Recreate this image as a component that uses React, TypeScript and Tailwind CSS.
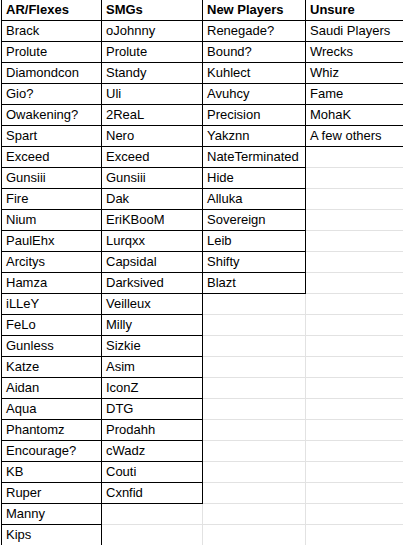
const columns: { title: string; items: string[] }[] = [
  {
    title: "AR/Flexes",
    items: [
      "Brack",
      "Prolute",
      "Diamondcon",
      "Gio?",
      "Owakening?",
      "Spart",
      "Exceed",
      "Gunsiii",
      "Fire",
      "Nium",
      "PaulEhx",
      "Arcitys",
      "Hamza",
      "iLLeY",
      "FeLo",
      "Gunless",
      "Katze",
      "Aidan",
      "Aqua",
      "Phantomz",
      "Encourage?",
      "KB",
      "Ruper",
      "Manny",
      "Kips",
    ],
  },
  {
    title: "SMGs",
    items: [
      "oJohnny",
      "Prolute",
      "Standy",
      "Uli",
      "2ReaL",
      "Nero",
      "Exceed",
      "Gunsiii",
      "Dak",
      "EriKBooM",
      "Lurqxx",
      "Capsidal",
      "Darksived",
      "Veilleux",
      "Milly",
      "Sizkie",
      "Asim",
      "IconZ",
      "DTG",
      "Prodahh",
      "cWadz",
      "Couti",
      "Cxnfid",
    ],
  },
  {
    title: "New Players",
    items: [
      "Renegade?",
      "Bound?",
      "Kuhlect",
      "Avuhcy",
      "Precision",
      "Yakznn",
      "NateTerminated",
      "Hide",
      "Alluka",
      "Sovereign",
      "Leib",
      "Shifty",
      "Blazt",
    ],
  },
  {
    title: "Unsure",
    items: ["Saudi Players", "Wrecks", "Whiz", "Fame", "MohaK", "A few others"],
  },
];

const ROWS = 26;

function Cell({ text, bold, filled }: { text: string; bold?: boolean; filled: boolean }) {
  return (
    <div
      className={`h-[21px] overflow-hidden whitespace-nowrap border-r border-b pl-[4px] text-[13px] leading-[20px] text-black ${
        filled ? "border-black" : "border-[#e2e2e2]"
      } ${bold ? "font-bold" : ""}`}
    >
      {text}
    </div>
  );
}

export default function App() {
  const cells = [];
  for (let r = 0; r < ROWS; r++) {
    for (let c = 0; c < columns.length; c++) {
      const col = columns[c];
      if (r === 0) {
        cells.push(<Cell key={`${r}-${c}`} text={col.title} bold filled />);
      } else {
        const item = col.items[r - 1];
        cells.push(<Cell key={`${r}-${c}`} text={item ?? ""} filled={item !== undefined} />);
      }
    }
  }

  return (
    <div
      className="h-[545px] w-[403px] overflow-hidden bg-white pl-px"
      style={{ fontFamily: '"Liberation Sans", Arial, sans-serif' }}
    >
      <div className="grid w-max grid-cols-[100px_101px_103px_100px] border-l border-black">
        {cells}
      </div>
    </div>
  );
}
